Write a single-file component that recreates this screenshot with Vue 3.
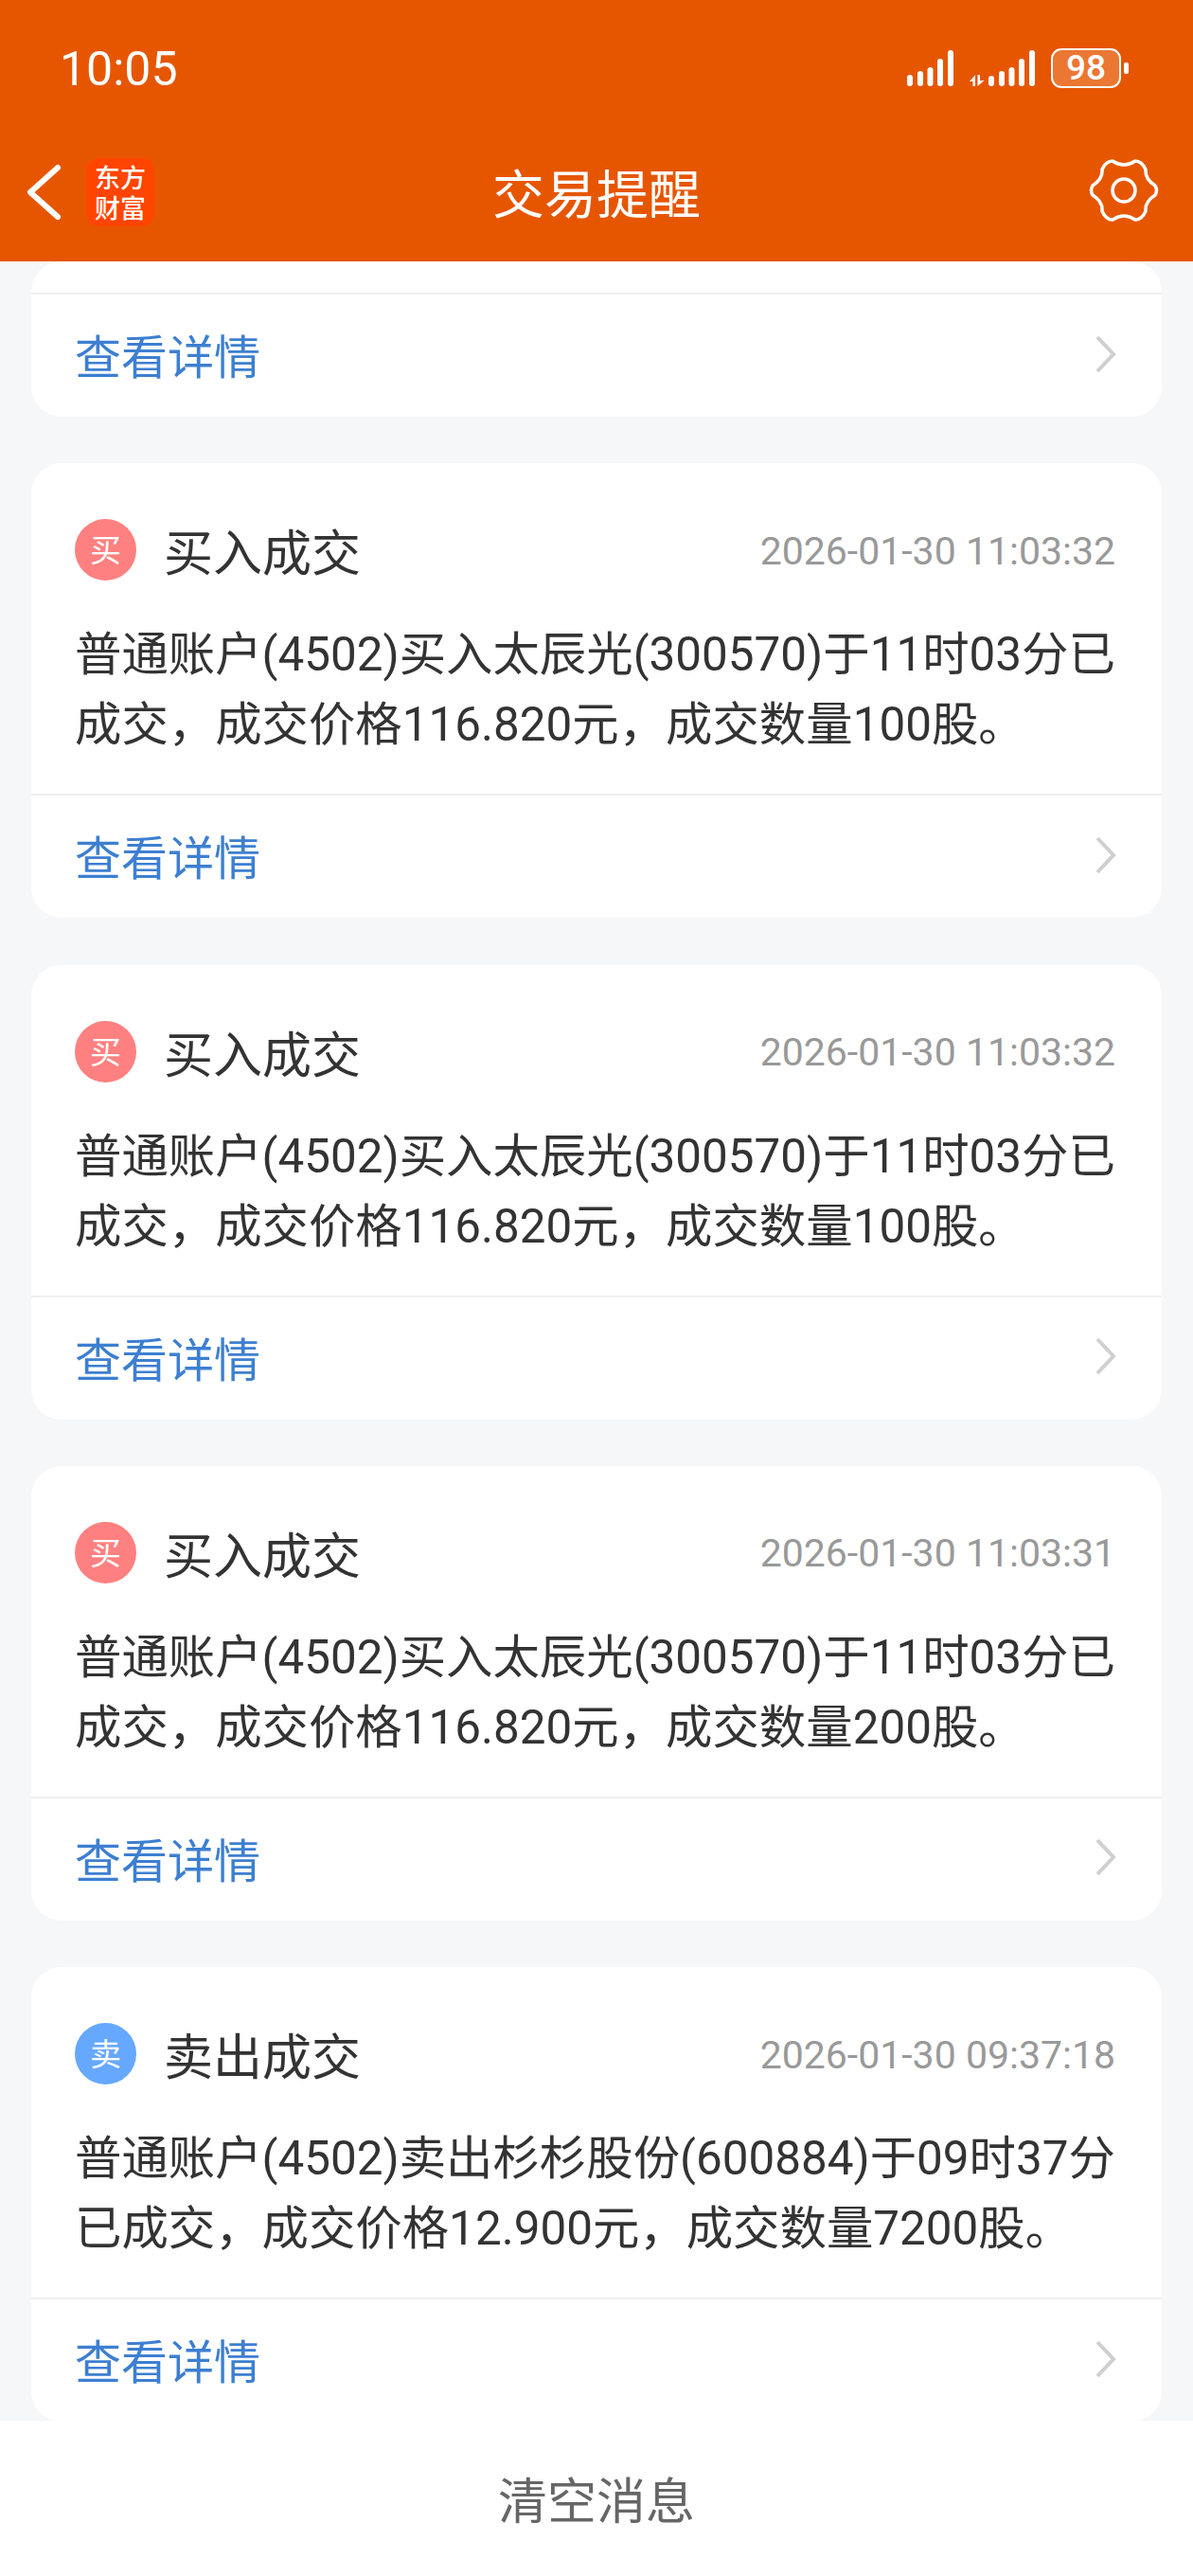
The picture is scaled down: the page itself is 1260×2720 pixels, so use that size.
<template>
  <div class="page">
    <header class="top">
      <div class="status">
        <span class="clock">10:05</span>
        <svg class="status-icons" width="140" height="38" viewBox="0 0 140 38">
          <g fill="#fff">
            <rect v-for="b in sim1" :key="b.x" :x="b.x" :y="b.y" width="6" :height="38 - b.y" rx="3" />
            <path d="M68 33l6-7v12h-2.500v-5zM76.500 26H79v6h4.500L76.500 38z" />
            <rect v-for="b in sim2" :key="b.x" :x="b.x" :y="b.y" width="6" :height="38 - b.y" rx="3" />
          </g>
        </svg>
        <div class="battery">98</div>
        <i class="battery-nub"></i>
      </div>
      <div class="nav">
        <svg class="back" width="44" height="64" viewBox="0 0 44 64">
          <path d="M37 6L8 32l29 26" fill="none" stroke="#fff" stroke-width="6" stroke-linecap="round" stroke-linejoin="round" />
        </svg>
        <div class="logo">东方<br />财富</div>
        <h1 class="nav-title">交易提醒</h1>
        <svg class="gear" width="76" height="76" viewBox="-38 -38 76 76">
          <path
            d="M-12-31Q0-23 12-31Q19-31 23-22Q22-12 33-5Q36 0 33 5Q22 12 23 22Q19 31 12 31Q0 23-12 31Q-19 31-23 22Q-22 12-33 5Q-36 0-33-5Q-22-12-23-22Q-19-31-12-31Z"
            fill="none" stroke="#fff" stroke-width="3.500" stroke-linejoin="round" />
          <circle cx="0" cy="0" r="12" fill="none" stroke="#fff" stroke-width="3.500" />
        </svg>
      </div>
    </header>

    <main class="list">
      <section class="card">
        <div class="partial-body"></div>
        <div class="detail">
          <span>查看详情</span>
          <svg width="24" height="40" viewBox="0 0 24 40"><path d="M3 2l17 18L3 38" fill="none" stroke="#cfcfcf" stroke-width="4" /></svg>
        </div>
      </section>

      <section v-for="(item, i) in messages" :key="i" class="card">
        <div class="body">
          <div class="head">
            <span class="badge" :class="item.side">{{ item.side === 'buy' ? '买' : '卖' }}</span>
            <span class="title">{{ item.title }}</span>
            <span class="time">{{ item.time }}</span>
          </div>
          <p class="text">{{ item.text }}</p>
        </div>
        <div class="detail">
          <span>查看详情</span>
          <svg width="24" height="40" viewBox="0 0 24 40"><path d="M3 2l17 18L3 38" fill="none" stroke="#cfcfcf" stroke-width="4" /></svg>
        </div>
      </section>
    </main>

    <footer class="clear">清空消息</footer>
  </div>
</template>

<script setup>
const sim1 = [
  { x: 2, y: 26 },
  { x: 13, y: 22 },
  { x: 23.5, y: 18 },
  { x: 34, y: 9 },
  { x: 45, y: 0 }
]
const sim2 = [
  { x: 88, y: 27 },
  { x: 99, y: 22 },
  { x: 109.5, y: 18 },
  { x: 120, y: 9 },
  { x: 131, y: 0 }
]

const buyText = (qty) =>
  `普通账户(4502)买入太辰光(300570)于11时03分已成交，成交价格116.820元，成交数量${qty}股。`

const messages = [
  { side: 'buy', title: '买入成交', time: '2026-01-30 11:03:32', text: buyText(100) },
  { side: 'buy', title: '买入成交', time: '2026-01-30 11:03:32', text: buyText(100) },
  { side: 'buy', title: '买入成交', time: '2026-01-30 11:03:31', text: buyText(200) },
  {
    side: 'sell',
    title: '卖出成交',
    time: '2026-01-30 09:37:18',
    text: '普通账户(4502)卖出杉杉股份(600884)于09时37分已成交，成交价格12.900元，成交数量7200股。'
  }
]
</script>

<style>
body {
  margin: 0;
  background: #f6f7f9;
}
</style>

<style scoped>
.page {
  width: 1260px;
  height: 2720px;
  display: flex;
  flex-direction: column;
  overflow: hidden;
  background: #f6f7f9;
  font-family: "Noto Sans CJK SC", "Noto Sans", sans-serif;
}

.top {
  height: 276px;
  flex: none;
  background: #e65600;
  color: #fff;
}

.status {
  height: 136px;
  padding: 51px 68px 0 63px;
  box-sizing: border-box;
  display: flex;
  align-items: flex-start;
}

.clock {
  font-family: Roboto, sans-serif;
  font-size: 50px;
  line-height: 44px;
  margin-right: auto;
}

.status-icons {
  flex: none;
  margin-top: 2px;
}

.battery {
  flex: none;
  width: 74px;
  height: 42px;
  margin-left: 14px;
  box-sizing: border-box;
  border: 2.500px solid #fff;
  border-radius: 11px;
  background: rgba(255, 255, 255, 0.2);
  font-family: Roboto, sans-serif;
  font-size: 37px;
  font-weight: 500;
  line-height: 37px;
  text-align: center;
}

.battery-nub {
  width: 5px;
  height: 12px;
  margin: 15px 0 0 3px;
  border-radius: 2px;
  background: #fff;
}

.nav {
  height: 140px;
  position: relative;
  display: flex;
  align-items: center;
  padding: 0 35px 0 24px;
}

.back {
  flex: none;
  margin-top: -6px;
}

.logo {
  flex: none;
  width: 72px;
  height: 72px;
  margin: -6px 0 0 23px;
  padding-top: 4px;
  box-sizing: border-box;
  border-radius: 14px;
  background: #ff4500;
  font-size: 27px;
  font-weight: 500;
  line-height: 32px;
  text-align: center;
}

.nav-title {
  position: absolute;
  left: 400px;
  right: 400px;
  top: 0;
  margin: 0;
  text-align: center;
  font-size: 55px;
  font-weight: 400;
  line-height: 131px;
}

.gear {
  flex: none;
  margin: -11px 0 0 auto;
}

.list {
  flex: 1;
  min-height: 0;
  padding: 0 33px;
  display: flex;
  flex-direction: column;
  gap: 49.330px;
  overflow: hidden;
}

.card {
  flex: none;
  background: #fff;
  border-radius: 32px;
  overflow: hidden;
}

.partial-body {
  height: 35px;
  box-sizing: border-box;
  border-bottom: 2px solid #eff0f2;
}

.body {
  height: 351px;
  box-sizing: border-box;
  padding: 59px 46px 0;
  border-bottom: 2px solid #eff0f2;
}

.head {
  display: flex;
  align-items: center;
  height: 65px;
}

.badge {
  flex: none;
  width: 65px;
  height: 65px;
  border-radius: 50%;
  color: #fff;
  font-size: 33px;
  line-height: 63px;
  text-align: center;
}

.badge.buy {
  background: #ff8080;
}

.badge.sell {
  background: #66a8ff;
}

.title {
  margin-left: 29px;
  font-size: 52px;
  color: #333;
}

.time {
  margin: 2px 3px 0 auto;
  font-family: Roboto, sans-serif;
  font-size: 41px;
  color: #999;
}

.text {
  margin: 41px 0 0;
  font-family: Roboto, "Noto Sans CJK SC", sans-serif;
  font-size: 49.400px;
  line-height: 74px;
  color: #333;
}

.detail {
  height: 129px;
  padding: 0 47px 4px 46px;
  box-sizing: border-box;
  display: flex;
  align-items: center;
  justify-content: space-between;
  font-size: 49px;
  color: #3d7fd1;
}

.clear {
  height: 164px;
  flex: none;
  background: #fff;
  text-align: center;
  font-size: 52px;
  line-height: 164px;
  color: #666;
}
</style>
